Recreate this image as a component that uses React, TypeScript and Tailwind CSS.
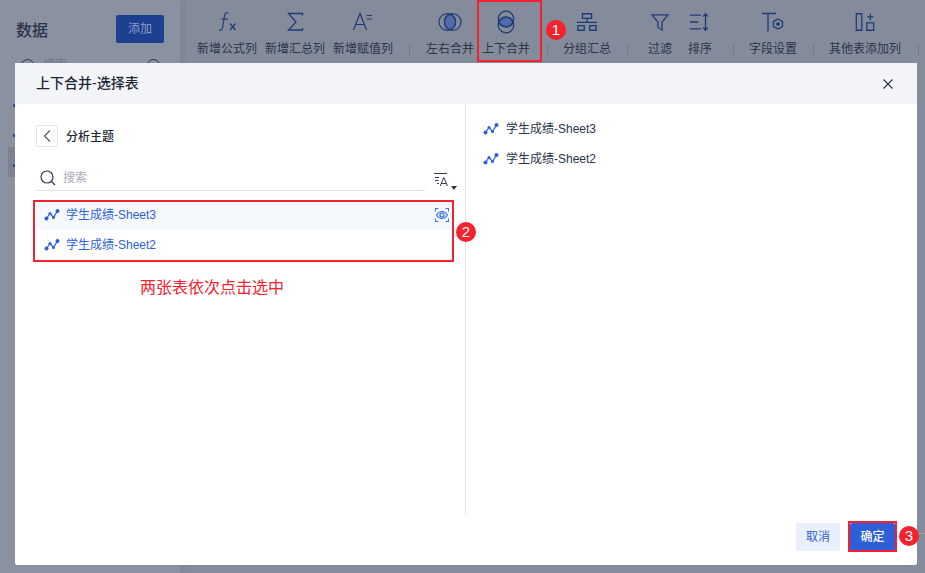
const cjk = { fontFamily: '"Liberation Sans", "Noto Sans CJK SC", sans-serif' };

function Fx() {
  return (
    <svg width="24" height="24" viewBox="0 0 24 24" fill="none" stroke="#1f3a77" strokeWidth="1.2">
      <path d="M13.500 3c-2.300-.6-3.400.2-3.800 2L7.500 17.500C7.100 19.500 6 20.500 4 20" />
      <path d="M6.500 9H13" />
      <path d="M15 13.500l5.500 6.500M20.500 13.500L15 20" />
    </svg>
  );
}

function Sigma() {
  return (
    <svg width="24" height="24" viewBox="0 0 24 24" fill="none" stroke="#1f3a77" strokeWidth="1.3">
      <path d="M19.500 5.500V3.500H5.500L13 12l-7.500 8H19.500v-2" />
    </svg>
  );
}

function AEq() {
  return (
    <svg width="24" height="24" viewBox="0 0 24 24" fill="none" stroke="#1f3a77" strokeWidth="1.2">
      <path d="M2.500 20L9 3.500 15.500 20M4.700 14.500h8.600" />
      <path d="M15.500 5.500h5.500M15.500 9h5.500" />
    </svg>
  );
}

function HMerge() {
  return (
    <svg width="24" height="24" viewBox="0 0 24 24" fill="none" stroke="#1f3a77" strokeWidth="1.2">
      <path d="M12 4.150A8.300 8.300 0 0 1 12 19.850 8.300 8.300 0 0 1 12 4.150z" fill="#4f6ba8" />
      <circle cx="9.300" cy="12" r="8.300" />
      <circle cx="14.700" cy="12" r="8.300" />
    </svg>
  );
}

function VMerge() {
  return (
    <svg width="24" height="24" viewBox="0 0 24 24" fill="none" stroke="#1f3a77" strokeWidth="1.2">
      <path d="M4.800 12A7.800 7.800 0 0 1 19.200 12 7.800 7.800 0 0 1 4.800 12z" fill="#4f6ba8" />
      <circle cx="12" cy="9" r="7.800" />
      <circle cx="12" cy="15" r="7.800" />
    </svg>
  );
}

function Group() {
  return (
    <svg width="22" height="22" viewBox="0 0 24 24" fill="none" stroke="#1f3a77" strokeWidth="1.4">
      <path d="M7 3h10v5H7zM2 16h7v5H2zM15 16h7v5h-7z" />
      <path d="M12 8v4.500M1 12.500h22" />
    </svg>
  );
}

function Funnel() {
  return (
    <svg width="20" height="20" viewBox="0 0 24 24" fill="none" stroke="#1f3a77" strokeWidth="1.5">
      <path d="M2.500 3.500h19L14.500 12v9.500l-5-3V12z" />
    </svg>
  );
}

function Sort() {
  return (
    <svg width="22" height="22" viewBox="0 0 24 24" fill="none" stroke="#1f3a77" strokeWidth="1.4">
      <path d="M1 4.500h12M1 12h9M1 19.500h12" />
      <path d="M18 3v18M15.500 6L18 3l2.500 3M15.500 18l2.500 3 2.500-3" />
    </svg>
  );
}

function FieldSet() {
  return (
    <svg width="24" height="24" viewBox="0 0 24 24" fill="none" stroke="#1f3a77" strokeWidth="1.3">
      <path d="M1 3.500h14M7 3.500v18" />
      <path d="M17 9l4.500 2.500v5L17 19l-4.500-2.500v-5z" />
      <circle cx="17" cy="14" r="1.200" fill="#1f3a77" />
    </svg>
  );
}

function AddCol() {
  return (
    <svg width="22" height="22" viewBox="0 0 24 24" fill="none" stroke="#1f3a77" strokeWidth="1.4">
      <path d="M2.500 3h6v18h-6zM14 13h7.500v8H14z" />
      <path d="M17.800 3v7M14.500 6.500h6.600" />
    </svg>
  );
}

function TableIcon() {
  return (
    <svg width="16" height="12" viewBox="0 0 16 12" fill="none">
      <path d="M2.500 9.500L6 4.500l3.500 4 4-6.500" stroke="#2f5fd8" strokeWidth="1.300" />
      <circle cx="2.500" cy="9.500" r="2" fill="#2f5fd8" />
      <circle cx="6" cy="4.500" r="1.500" fill="#2f5fd8" />
      <circle cx="9.500" cy="8.500" r="1.500" fill="#2f5fd8" />
      <circle cx="13.500" cy="2" r="2" fill="#2f5fd8" />
    </svg>
  );
}

function Preview() {
  return (
    <svg width="14" height="14" viewBox="0 0 14 14" fill="none" stroke="#3f6fe0" strokeWidth="1.100">
      <path d="M.5 3.500V.5h3M10.500.5h3v3M13.500 10.500v3h-3M3.500 13.500h-3v-3" />
      <path d="M1.500 7C3 4.500 5 3.500 7 3.500s4 1 5.500 3.500C11 9.500 9 10.500 7 10.500S3 9.500 1.500 7z" fill="#d6e2f8" />
      <circle cx="7" cy="7" r="2" />
    </svg>
  );
}

function SortName() {
  return (
    <svg width="14" height="15" viewBox="0 0 14 15" fill="none" stroke="#333b4d" strokeWidth="1">
      <path d="M0 1.500h13M1 5.500h4M1 8.500h3.500M3 11.500h2" />
      <path d="M6.200 14L9.800 5.500 13.400 14M7.300 11.500h5" />
    </svg>
  );
}

function Sep() {
  return <div className="w-px h-[11px] bg-[#6f7890] mt-[44px] shrink-0" />;
}

function Tool({ label, width, icon }: { label: string; width: string; icon: React.ReactNode }) {
  return (
    <div className={`${width} shrink-0 flex flex-col items-center pt-[10px] text-[12px] leading-[16px] text-[#2b3448]`}>
      <div className="h-[24px] mb-[5px] flex items-center">{icon}</div>
      <span className="mt-[2px] whitespace-nowrap">{label}</span>
    </div>
  );
}

function Badge({ n, className }: { n: number; className: string }) {
  return (
    <div
      className={`absolute w-[20px] h-[20px] rounded-full bg-[#f5222d] text-white text-[15px] leading-[20px] text-center ${className}`}
    >
      {n}
    </div>
  );
}

function Background() {
  return (
    <div className="relative flex h-full bg-[#848c9c]">
      <div className="relative w-[180px] shrink-0 pl-[16px] pr-[16px] bg-[#8a92a2] shadow-[3px_0_6px_rgba(0,0,0,0.06)]">
        <div className="flex items-center justify-between mt-[15px]">
          <span className="pt-[3px] text-[16px] font-medium text-[#2b3448]">数据</span>
          <div className="w-[48px] h-[28px] rounded-[2px] bg-[#1c3f90] text-[#8c9cc4] text-[12px] leading-[28px] text-center">
            添加
          </div>
        </div>
        {/* sidebar search, mostly hidden behind the dialog */}
        <div className="flex items-center mt-[16px] pl-[5px]">
          <div className="w-[13px] h-[13px] rounded-full border border-[#2b3448]" />
          <span className="ml-[9px] text-[12px] leading-[13px] text-[#6f7688]">搜索</span>
          <div className="ml-auto mr-[4px] w-[13px] h-[13px] rounded-full border border-[#2b3448]" />
        </div>
        <div className="absolute left-[8px] top-[147px] w-[10px] h-[30px] bg-[#7a8293]" />
        <div className="absolute left-[13px] top-[104px] w-[3px] h-[3px] rounded-full bg-[#1c3f90]" />
        <div className="absolute left-[13px] top-[134px] w-[3px] h-[3px] rounded-full bg-[#1c3f90]" />
        <div className="absolute left-[13px] top-[164px] w-[3px] h-[3px] rounded-full bg-[#1c3f90]" />
      </div>
      <div className="flex-1 flex pl-[13px]">
        <Tool label="新增公式列" width="w-[68px]" icon={<Fx />} />
        <Tool label="新增汇总列" width="w-[68px]" icon={<Sigma />} />
        <Tool label="新增赋值列" width="w-[68px]" icon={<AEq />} />
        <div className="w-[12px]" />
        <Sep />
        <div className="w-[9px]" />
        <Tool label="左右合并" width="w-[62px]" icon={<HMerge />} />
        <Tool label="上下合并" width="w-[50px]" icon={<VMerge />} />
        <div className="w-[16px]" />
        <Sep />
        <div className="w-[9px]" />
        <Tool label="分组汇总" width="w-[60px]" icon={<Group />} />
        <div className="w-[10px]" />
        <Sep />
        <div className="w-[12px]" />
        <Tool label="过滤" width="w-[40px]" icon={<Funnel />} />
        <Tool label="排序" width="w-[40px]" icon={<Sort />} />
        <div className="w-[13px]" />
        <Sep />
        <div className="w-[9px]" />
        <Tool label="字段设置" width="w-[60px]" icon={<FieldSet />} />
        <div className="w-[10px]" />
        <Sep />
        <div className="w-[8px]" />
        <Tool label="其他表添加列" width="w-[86px]" icon={<AddCol />} />
        <div className="w-[10px]" />
        <Sep />
      </div>
      <div className="absolute right-0 top-[533px] w-[8px] h-px bg-[#9aa1af]" />
    </div>
  );
}

function SheetRow({ name, active }: { name: string; active?: boolean }) {
  return (
    <div className={`h-[28px] flex items-center pl-[8px] pb-[2px] ${active ? 'bg-[#f5f9fe]' : ''}`}>
      <TableIcon />
      <span className="ml-[6px] text-[12px] text-[#2f5fd8]">{name}</span>
      {active && (
        <span className="ml-auto mr-[1px] flex">
          <Preview />
        </span>
      )}
    </div>
  );
}

function Dialog() {
  return (
    <div className="absolute left-[15px] top-[63px] w-[902px] h-[502px] bg-white rounded-[2px] flex flex-col">
      <div className="h-[41px] shrink-0 bg-[#f2f4f8] flex items-center justify-between pl-[21px] pr-[24px]">
        <span className="text-[14px] font-medium text-[#1f2735]">上下合并-选择表</span>
        <svg width="10" height="10" viewBox="0 0 10 10" fill="none" stroke="#2b3448" strokeWidth="1.100">
          <path d="M.5.5l9 9M9.500.5l-9 9" />
        </svg>
      </div>
      <div className="flex-1 flex min-h-0">
        <div className="w-[451px] shrink-0 h-[410px] border-r border-[#e2e5ec] pt-[21px] pl-[21px]">
          <div className="flex items-center">
            <div className="w-[22px] h-[22px] rounded-[2px] border border-[#e2e5ec] flex items-center justify-center">
              <svg width="8" height="12" viewBox="0 0 8 12" fill="none" stroke="#4a5263" strokeWidth="1.100">
                <path d="M7 .5L1.500 6 7 11.500" />
              </svg>
            </div>
            <span className="ml-[8px] pt-[2px] text-[12px] font-medium text-[#1f2735]">分析主题</span>
          </div>
          <div className="flex items-start mt-[19px]">
            <div className="w-[389px] h-[25px] border-b border-[#dfe2ea] flex items-center pl-[4px]">
              <svg width="16" height="16" viewBox="0 0 16 16" fill="none" stroke="#36404f" strokeWidth="1.200">
                <circle cx="7" cy="7" r="6" />
                <path d="M11.500 11.500l3.500 3.500" />
              </svg>
              <span className="ml-[7px] text-[12px] text-[#a9aeb8]">搜索</span>
            </div>
            <div className="ml-[9px] mt-[6px] flex items-end">
              <SortName />
              <div className="ml-[3px] mb-[-3px] w-0 h-0 border-x-[3.500px] border-x-transparent border-t-[4px] border-t-[#2b3448]" />
            </div>
          </div>
          <div className="mt-[11px] w-[414px] flex flex-col gap-[2px]">
            <SheetRow name="学生成绩-Sheet3" active />
            <SheetRow name="学生成绩-Sheet2" />
          </div>
          <div className="mt-[18px] ml-[104px] text-[16px] leading-[20px] text-[#f5222d]">两张表依次点击选中</div>
        </div>
        <div className="flex-1 pl-[17px] pt-[10px]">
          {['学生成绩-Sheet3', '学生成绩-Sheet2'].map((name) => (
            <div key={name} className="h-[30px] flex items-center">
              <TableIcon />
              <span className="ml-[7px] text-[12px] text-[#2b3448]">{name}</span>
            </div>
          ))}
        </div>
      </div>
      <div className="h-[51px] shrink-0 flex justify-end gap-[10px] pr-[22px] pt-[9px]">
        <div className="w-[44px] h-[28px] rounded-[2px] bg-[#e9effb] text-[#2f5fd8] text-[12px] leading-[28px] text-center">
          取消
        </div>
        <div className="w-[45px] h-[28px] rounded-[2px] bg-[#2f5fd8] text-white text-[12px] font-medium leading-[28px] text-center">
          确定
        </div>
      </div>
    </div>
  );
}

export default function App() {
  return (
    <div className="relative w-[925px] h-[573px] overflow-hidden" style={cjk}>
      <Background />
      <Dialog />
      {/* annotations drawn on top of the screenshot */}
      <div className="absolute left-[477px] top-0 w-[65px] h-[62px] border-2 border-[#f5222d]" />
      <div className="absolute left-[33px] top-[200px] w-[421px] h-[62px] border-2 border-[#f5222d]" />
      <div className="absolute left-[848px] top-[521px] w-[49px] h-[31px] border-2 border-[#f5222d]" />
      <Badge n={1} className="left-[546px] top-[20px]" />
      <Badge n={2} className="left-[456px] top-[222px]" />
      <Badge n={3} className="left-[899px] top-[526px]" />
    </div>
  );
}
